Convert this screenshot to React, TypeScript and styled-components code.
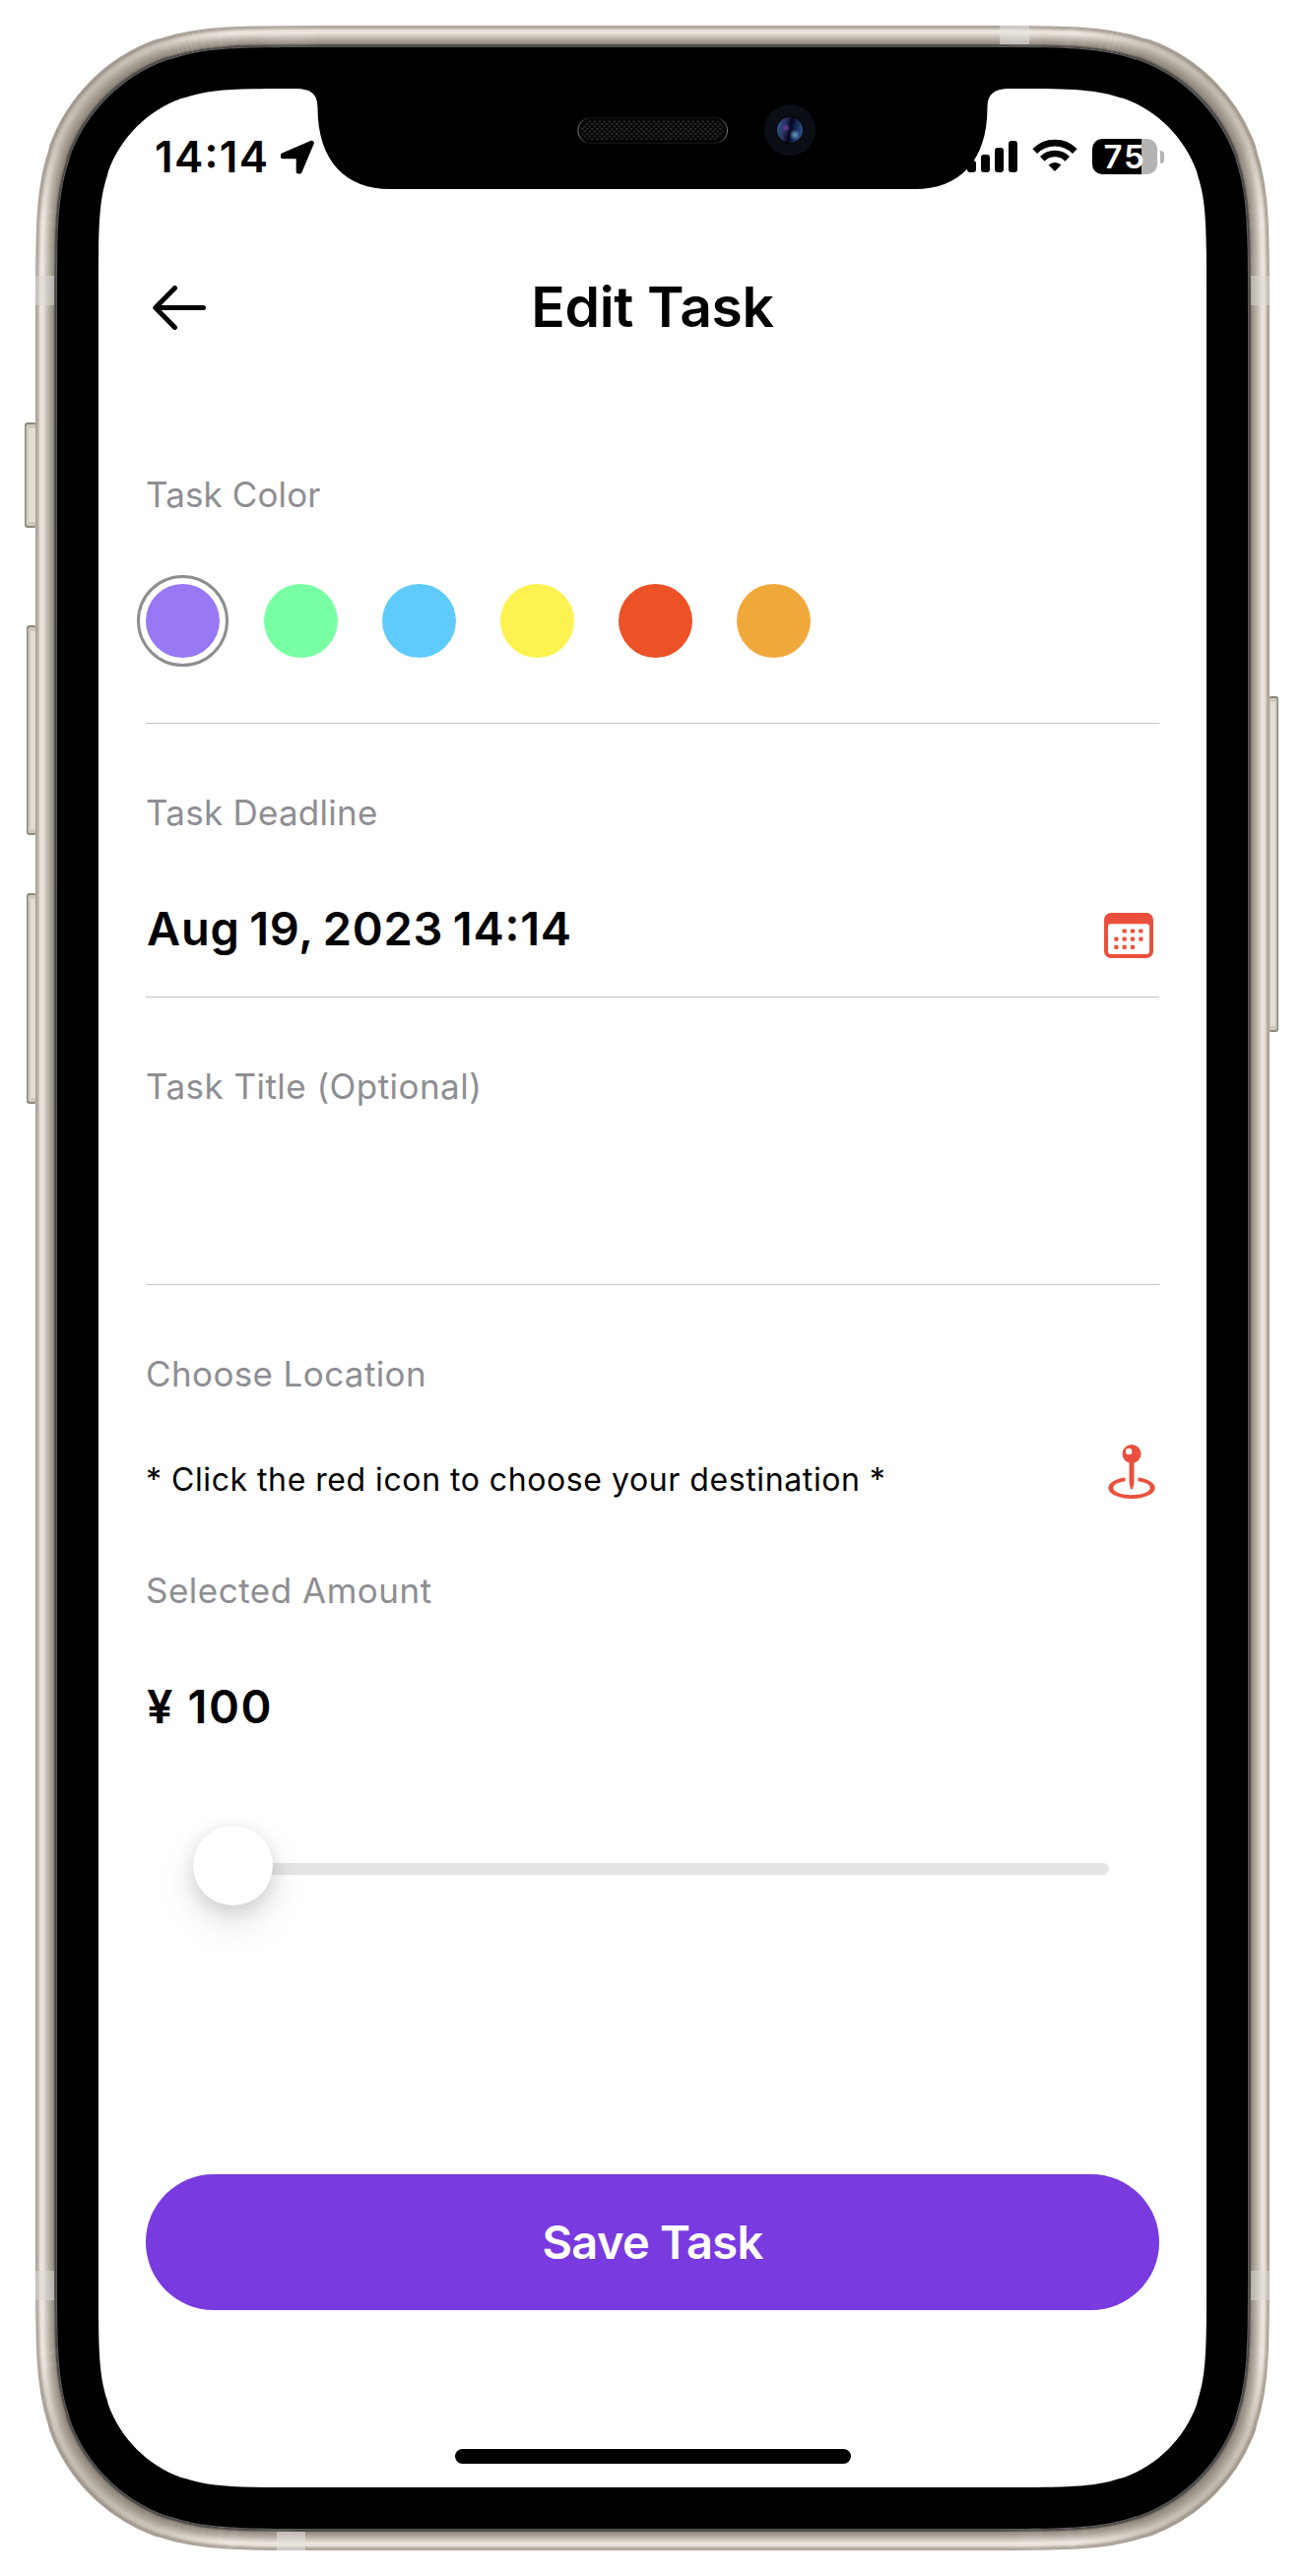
import React from "react";
import styled, { createGlobalStyle } from "styled-components";

const GlobalStyle = createGlobalStyle`
  *, *::before, *::after { box-sizing: border-box; }
  body { margin: 0; background: #fff; }
`;

const Stage = styled.main`
  position: relative;
  width: 1325px;
  height: 2616px;
  padding: 90px 100px;
  overflow: hidden;
  font-family: Inter, "Liberation Sans", sans-serif;
  color: #000;
`;

const Screen = styled.div`
  display: flex;
  flex-direction: column;
  width: 1125px;
  height: 2436px;
  background: #fff;
`;

const StatusBar = styled.div`
  display: flex;
  justify-content: space-between;
  align-items: center;
  height: 138px;
  padding: 0 43px 0 57px;
`;

const StatusGroup = styled.div<{ $gap: number }>`
  display: flex;
  align-items: center;
  gap: ${(p) => p.$gap}px;
`;

const Clock = styled.span`
  font-size: 44px;
  line-height: 54px;
  font-weight: 600;
  letter-spacing: 1.3px;
  font-feature-settings: "case";
`;

const Battery = styled.div`
  display: flex;
  align-items: center;
  gap: 3px;
`;

const BatteryBody = styled.div`
  display: flex;
  align-items: center;
  justify-content: center;
  width: 66px;
  height: 36px;
  border-radius: 10px;
  background: linear-gradient(90deg, #000 50px, #b3b3b3 50px);
  color: #fff;
  font-size: 33px;
  line-height: 36px;
  font-weight: 600;
  letter-spacing: 1.8px;
`;

const BatteryCap = styled.div`
  width: 4px;
  height: 13px;
  border-radius: 0 5px 5px 0;
  background: #b3b3b3;
`;

const Header = styled.header`
  display: grid;
  grid-template-columns: 120px 1fr 120px;
  align-items: center;
  height: 168px;
  padding: 0 48px;
`;

const BackButton = styled.button`
  display: flex;
  padding: 0 0 0 7px;
  border: 0;
  background: none;
`;

const Title = styled.h1`
  margin: 0;
  font-size: 57px;
  line-height: 68px;
  font-weight: 600;
  letter-spacing: -0.35px;
  text-align: center;
`;

const Form = styled.form`
  display: flex;
  flex-direction: column;
  flex: 1;
  padding: 16px 48px 0;
`;

const Field = styled.section<{ $bottom: number; $plain?: boolean }>`
  display: flex;
  flex-direction: column;
  padding: 69px 0 ${(p) => p.$bottom}px;
  border-bottom: ${(p) => (p.$plain ? "0" : "1px solid #c6c6c8")};
`;

const Label = styled.div<{ $track: number }>`
  font-size: 35px;
  line-height: 42px;
  color: #8e8e93;
  letter-spacing: ${(p) => p.$track}px;
  white-space: nowrap;
`;

const Swatches = styled.div`
  display: flex;
  gap: 45px;
  margin-top: 70px;
`;

const Swatch = styled.button<{ $color: string; $selected?: boolean }>`
  width: 75px;
  height: 75px;
  padding: 0;
  border: 0;
  border-radius: 50%;
  background: ${(p) => p.$color};
  outline: ${(p) => (p.$selected ? "3px solid #8e8e93" : "none")};
  outline-offset: 6px;
`;

const Row = styled.div<{ $top: number }>`
  display: flex;
  align-items: center;
  justify-content: space-between;
  height: 80px;
  margin-top: ${(p) => p.$top}px;
`;

const Value = styled.div<{ $track: number; $word?: number }>`
  padding-left: 1px;
  font-size: 47px;
  line-height: 56px;
  font-weight: 600;
  letter-spacing: ${(p) => p.$track}px;
  word-spacing: ${(p) => p.$word ?? 0}px;
  font-feature-settings: "case";
  white-space: nowrap;
`;

const Hint = styled.div`
  margin-top: 1px;
  font-size: 32px;
  line-height: 40px;
  letter-spacing: 0.63px;
  word-spacing: -0.4px;
  white-space: nowrap;
`;

const CalendarSlot = styled.div`
  display: flex;
  margin: 14px 6px 0 0;
`;

const PinSlot = styled.div`
  display: flex;
  margin: 0 4px 15px 0;
`;

const TitleInput = styled.input`
  height: 120px;
  margin-top: 30px;
  padding: 0;
  border: 0;
  background: none;
  font: 600 47px Inter, "Liberation Sans", sans-serif;
`;

const AmountField = styled.section`
  display: flex;
  flex-direction: column;
  gap: 69px;
  margin-top: 52px;
`;

const Slider = styled.div`
  display: flex;
  align-items: center;
  height: 81px;
  margin: 93px 51px 0 48px;
`;

const Knob = styled.div`
  z-index: 1;
  flex: none;
  width: 81px;
  height: 81px;
  border-radius: 50%;
  background: #fff;
  box-shadow: 0 18px 39px rgba(0, 0, 0, 0.11), 0 6px 20px rgba(0, 0, 0, 0.12);
`;

const Track = styled.div`
  flex: 1;
  height: 12px;
  margin: 7px 0 0 -40px;
  border-radius: 6px;
  background: #e4e4e5;
`;

const SaveButton = styled.button`
  height: 138px;
  margin-top: 273px;
  padding: 0;
  border: 0;
  border-radius: 69px;
  background: #793ae0;
  color: #fff;
  font: 600 47px/56px Inter, "Liberation Sans", sans-serif;
  letter-spacing: -0.7px;
`;

const HomeBar = styled.div`
  align-self: center;
  width: 402px;
  height: 15px;
  margin-bottom: 24px;
  border-radius: 8px;
  background: #000;
`;

const DeviceArt = styled.svg`
  position: absolute;
  inset: 0;
  pointer-events: none;
`;

const colors = ["#9878f5", "#78ffa4", "#5ecbfb", "#fdf250", "#ed5126", "#f1a83b"];

// Rounded rectangle whose corners ease into the straight edges
function squircle(x: number, y: number, w: number, h: number, r: number) {
  const corner = (cx: number, cy: number, ux: number, uy: number, vx: number, vy: number) => {
    // u runs back along the incoming edge, v along the outgoing edge
    const p = (a: number, b: number) =>
      `${(cx + (ux * a + vx * b) * r).toFixed(2)} ${(cy + (uy * a + vy * b) * r).toFixed(2)}`;
    return (
      `L${p(1.52866, 0)}C${p(1.08849, 0)} ${p(0.86841, 0)} ${p(0.66993, 0.0655)}L${p(0.63149, 0.07491)}` +
      `C${p(0.37282, 0.16906)} ${p(0.16906, 0.37282)} ${p(0.07491, 0.63149)}L${p(0.0655, 0.66993)}` +
      `C${p(0, 0.86841)} ${p(0, 1.08849)} ${p(0, 1.52866)}`
    );
  };
  return (
    `M${x + w / 2} ${y}` +
    corner(x + w, y, -1, 0, 0, 1) +
    corner(x + w, y + h, 0, -1, -1, 0) +
    corner(x, y + h, 1, 0, 0, -1) +
    corner(x, y, 0, 1, 1, 0) +
    "Z"
  );
}

const ring = (d: number) => squircle(36 + d, 26 + d, 1253 - 2 * d, 2564 - 2 * d, 192 - 0.75 * d);

// Metal band colours from the outer rim inwards, one per pixel
const band = [
  "#aaa298", "#b3aba1", "#b8afa6", "#cdc5bc", "#e2dbd2", "#e9e2da", "#ece5dd", "#ebe4dc", "#e4ddd4", "#dad2c9",
  "#d2cac0", "#c9c1b7", "#c0b8ae", "#b8b0a6", "#b0a89e", "#a9a096", "#a2998f", "#9b9288", "#8a8278", "#5d5953",
  "#444342", "#5b5b5b",
];

const cornerShades = [[90, 80], [1235, 80], [90, 2536], [1235, 2536]];

const NOTCH =
  "M300 80V90C316 90 322.5 96 322.5 109C322.5 165 352 192 396 192H929C973 192 1002.5 165 1002.5 109C1002.5 96 1009 90 1025 90V80Z";

function SideButton({ x, y, w, h, right }: { x: number; y: number; w: number; h: number; right?: boolean }) {
  return (
    <g>
      <rect x={x} y={y} width={w} height={h} rx="3" fill="#8f887b" />
      <rect x={right ? x : x + 1.5} y={y + 2} width={w - 1.5} height={h - 4} rx="2" fill="#cfc9be" />
      <rect x={right ? x + 2 : x + 4} y={y + 6} width={w - 5} height={h - 12} fill="#e3ded5" />
    </g>
  );
}

function Device() {
  return (
    <DeviceArt width="1325" height="2616" viewBox="0 0 1325 2616">
      <defs>
        <pattern id="mesh" width="5" height="5" patternUnits="userSpaceOnUse">
          <rect width="5" height="5" fill="#050505" />
          <path d="M0 0h2.5v2h-2.5zM2.5 2.5h2.5v2h-2.5z" fill="#262626" />
        </pattern>
        <linearGradient id="lens" x1="0" x2="1" y1="0.4" y2="0.6">
          <stop offset="0" stopColor="#2f5c88" />
          <stop offset="0.3" stopColor="#2a2c5c" />
          <stop offset="0.5" stopColor="#04061a" />
          <stop offset="0.65" stopColor="#14204a" />
          <stop offset="1" stopColor="#2c5590" />
        </linearGradient>
        <radialGradient id="violet">
          <stop offset="0" stopColor="#6a3c9a" />
          <stop offset="1" stopColor="#6a3c9a" stopOpacity="0" />
        </radialGradient>
        <radialGradient id="glint">
          <stop offset="0" stopColor="#6c9cc0" />
          <stop offset="1" stopColor="#6c9cc0" stopOpacity="0" />
        </radialGradient>
        <linearGradient id="grille" x1="0" x2="1">
          <stop offset="0" stopColor="#666" />
          <stop offset="0.06" stopColor="#141414" />
          <stop offset="0.94" stopColor="#141414" />
          <stop offset="1" stopColor="#666" />
        </linearGradient>
        <radialGradient id="shade">
          <stop offset="0" stopColor="#80776b" stopOpacity="0.42" />
          <stop offset="0.5" stopColor="#80776b" stopOpacity="0.3" />
          <stop offset="1" stopColor="#80776b" stopOpacity="0" />
        </radialGradient>
        <clipPath id="metal">
          <path d={ring(1) + ring(19)} clipRule="evenodd" />
        </clipPath>
      </defs>
      <SideButton x={25} y={429} w={12} h={107} />
      <SideButton x={27} y={635} w={10} h={213} />
      <SideButton x={27} y={907} w={10} h={214} />
      <SideButton x={1288} y={707} w={10} h={341} right />
      {band.map((c, i) => (
        <path key={i} d={ring(i + 0.75)} fill="none" stroke={c} strokeWidth="1.6" />
      ))}
      <g clipPath="url(#metal)">
        {cornerShades.map(([cx, cy]) => (
          <circle key={`${cx}-${cy}`} cx={cx} cy={cy} r="150" fill="url(#shade)" />
        ))}
      </g>
      <g fill="#dcdad5" fillOpacity="0.5">
        <rect x="36" y="280" width="19" height="30" />
        <rect x="1270" y="280" width="19" height="30" />
        <rect x="36" y="2306" width="19" height="30" />
        <rect x="1270" y="2306" width="19" height="30" />
      </g>
      <g fill="#e4e4e0" fillOpacity="0.55">
        <rect x="1015" y="26" width="30" height="19" />
        <rect x="281" y="2571" width="29" height="19" />
      </g>
      <path d={ring(22) + squircle(100, 90, 1125, 2436, 133)} fill="#000" fillRule="evenodd" />
      <path d={NOTCH} fill="#000" />
      <rect x="587" y="119.5" width="151.5" height="26" rx="13" fill="#050505" stroke="url(#grille)" strokeWidth="1.2" />
      <rect x="590" y="122" width="145" height="20" rx="10" fill="url(#mesh)" />
      <circle cx="802" cy="132" r="26" fill="#0b0f15" />
      <circle cx="802" cy="132" r="14" fill="#04060a" />
      <circle cx="802" cy="132" r="13" fill="url(#lens)" />
      <circle cx="798" cy="130" r="4.5" fill="url(#violet)" />
      <circle cx="807" cy="137" r="5.5" fill="url(#glint)" />
    </DeviceArt>
  );
}

const LocationArrow = () => (
  <svg width="34" height="35" viewBox="284 142 34 35">
    <path
      d="M315.3 145.3L286.4 157.8V158.8H302.2V174H303.2Z"
      stroke="#000"
      strokeWidth="5"
      strokeLinejoin="round"
    />
  </svg>
);

const Signal = () => (
  <svg width="51" height="32" viewBox="0 0 51 32">
    <rect x="0" y="20" width="9" height="12" rx="3" />
    <rect x="14" y="14" width="9" height="18" rx="3" />
    <rect x="28" y="7" width="9" height="25" rx="3" />
    <rect x="42" y="0" width="9" height="32" rx="3" />
  </svg>
);

const Wifi = () => (
  <svg width="46" height="37" viewBox="0 0 46 37" fill="none" stroke="#000" strokeWidth="6.6">
    <path d="M2.7 12.6A28.5 28.5 0 0 1 43.3 12.6" />
    <path d="M10.3 20.3A18 18 0 0 1 35.7 20.3" />
    <path d="M23 33L16.6 26.6A9.2 9.2 0 0 1 29.4 26.6Z" fill="#000" stroke="none" />
  </svg>
);

const BackArrow = () => (
  <svg width="54" height="45" viewBox="0 0 54 45" fill="none" stroke="#000" strokeWidth="5" strokeLinecap="round" strokeLinejoin="round">
    <path d="M51.5 22.5H3M22.5 2.5L2.8 22.5L22.5 42.5" />
  </svg>
);

const dots = [[1, 0], [2, 0], [3, 0], [0, 1], [1, 1], [2, 1], [3, 1], [0, 2], [1, 2], [2, 2]];

const Calendar = () => (
  <svg width="50" height="46" viewBox="0 0 50 46" fill="#ea503d">
    <path
      fillRule="evenodd"
      d="M7 0H43A7 7 0 0 1 50 7V39A7 7 0 0 1 43 46H7A7 7 0 0 1 0 39V7A7 7 0 0 1 7 0ZM7 11.2A3 3 0 0 0 4 14.2V39A3 3 0 0 0 7 42H43A3 3 0 0 0 46 39V14.2A3 3 0 0 0 43 11.2Z"
    />
    {dots.map(([c, r]) => (
      <rect key={`${c}${r}`} x={10.3 + c * 8.3} y={16.4 + r * 8.2} width="4.2" height="4.2" rx="1.2" />
    ))}
  </svg>
);

const Pin = () => (
  <svg width="48" height="55" viewBox="0 0 48 55" fill="#ea503d">
    <path fillRule="evenodd" d="M0.3 44A23.7 11 0 1 1 47.7 44A23.7 11 0 1 1 0.3 44ZM5.3 44A18.7 7.3 0 1 0 42.7 44A18.7 7.3 0 1 0 5.3 44Z" />
    <rect x="17.4" y="31" width="13" height="8" fill="#fff" />
    <path fillRule="evenodd" d="M24 0A9.5 9.5 0 1 1 24 19A9.5 9.5 0 1 1 24 0ZM21.2 3.8A3.2 3.2 0 1 0 21.2 10.2A3.2 3.2 0 1 0 21.2 3.8Z" />
    <path d="M21.5 18H26.5V37C26.5 41 25 45.7 24 45.7C23 45.7 21.5 41 21.5 37Z" />
  </svg>
);

export default function App() {
  return (
    <>
      <GlobalStyle />
      <Stage>
        <Screen>
          <StatusBar>
            <StatusGroup $gap={12}>
              <Clock>14:14</Clock>
              <LocationArrow />
            </StatusGroup>
            <StatusGroup $gap={15}>
              <Signal />
              <Wifi />
              <Battery>
                <BatteryBody>75</BatteryBody>
                <BatteryCap />
              </Battery>
            </StatusGroup>
          </StatusBar>
          <Header>
            <BackButton aria-label="Back">
              <BackArrow />
            </BackButton>
            <Title>Edit Task</Title>
          </Header>
          <Form onSubmit={(e) => e.preventDefault()}>
            <Field $bottom={66}>
              <Label $track={0.12}>Task Color</Label>
              <Swatches>
                {colors.map((c, i) => (
                  <Swatch key={c} type="button" $color={c} $selected={i === 0} />
                ))}
              </Swatches>
            </Field>
            <Field $bottom={29}>
              <Label $track={0.25}>Task Deadline</Label>
              <Row $top={57}>
                <Value $track={0.75} $word={-3}>Aug 19, 2023 14:14</Value>
                <CalendarSlot>
                  <Calendar />
                </CalendarSlot>
              </Row>
            </Field>
            <Field $bottom={30}>
              <Label $track={0.45}>Task Title (Optional)</Label>
              <TitleInput />
            </Field>
            <Field $bottom={0} $plain>
              <Label $track={0.38}>Choose Location</Label>
              <Row $top={46}>
                <Hint>* Click the red icon to choose your destination *</Hint>
                <PinSlot>
                  <Pin />
                </PinSlot>
              </Row>
            </Field>
            <AmountField>
              <Label $track={0.5}>Selected Amount</Label>
              <Value $track={1.6}>¥ 100</Value>
            </AmountField>
            <Slider>
              <Knob />
              <Track />
            </Slider>
            <SaveButton>Save Task</SaveButton>
          </Form>
          <HomeBar />
        </Screen>
        <Device />
      </Stage>
    </>
  );
}
